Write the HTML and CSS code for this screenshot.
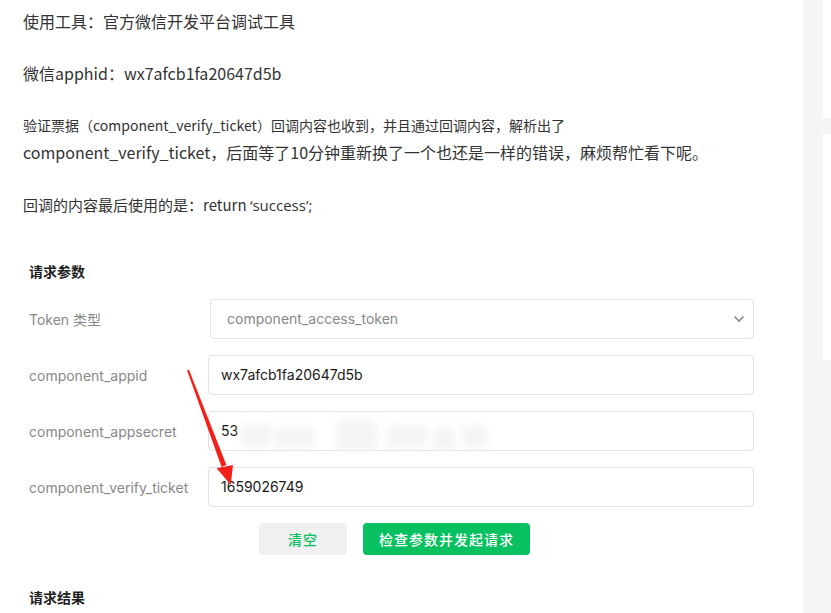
FILE: index.html
```html
<!DOCTYPE HTML>
<html lang="zh-CN">
<head>
	<meta charset="UTF-8">
	<title>请求参数</title>
	<link rel="stylesheet" href="styles.css">
</head>
<body>
	<div class="pagina">
		<div class="principal">
			<div class="post">
				<p class="p1">使用工具：官方微信开发平台调试工具</p>
				<p class="p2">微信apphid：wx7afcb1fa20647d5b</p>
				<p class="p3"><span class="chico">验证票据（component_verify_ticket）回调内容也收到，并且通过回调内容，解析出了</span><br>component_verify_ticket，后面等了10分钟重新换了一个也还是一样的错误，麻烦帮忙看下呢。</p>
				<p class="p4">回调的内容最后使用的是：return <span class="latino">‘success’;</span></p>
			</div>

			<div class="formulario">
				<h3 class="titulo">请求参数</h3>
				<div class="fila">
					<label class="etiqueta">Token 类型</label>
					<div class="control selector">
						<span>component_access_token</span>
						<svg class="flecha" width="12" height="8" viewBox="0 0 12 8"><path d="M1.5 1.5 L6 6 L10.5 1.5" fill="none" stroke="#888" stroke-width="1.6"/></svg>
					</div>
				</div>
				<div class="fila">
					<label class="etiqueta">component_appid</label>
					<div class="control">wx7afcb1fa20647d5b</div>
				</div>
				<div class="fila">
					<label class="etiqueta">component_appsecret</label>
					<div class="control secreto">53
						<div class="borron">
							<i style="left:4px;top:2px;width:30px;height:22px"></i>
							<i style="left:38px;top:6px;width:40px;height:20px"></i>
							<i style="left:100px;top:-2px;width:40px;height:30px"></i>
							<i style="left:150px;top:4px;width:40px;height:22px"></i>
							<i style="left:196px;top:6px;width:22px;height:22px"></i>
							<i style="left:226px;top:4px;width:24px;height:22px"></i>
						</div>
					</div>
				</div>
				<div class="fila">
					<label class="etiqueta">component_verify_ticket</label>
					<div class="control">1659026749</div>
				</div>
				<div class="botones">
					<button class="btn limpiar">清空</button>
					<button class="btn enviar">检查参数并发起请求</button>
				</div>
				<h3 class="titulo resultado">请求结果</h3>
			</div>

			<!-- flecha roja de la captura -->
			<svg class="marca" width="60" height="130" viewBox="0 0 60 130">
				<polygon points="7.1,10.4 8.9,9.6 46.4,105.1 41.6,106.9" fill="#f3201a"/>
				<polygon points="50.7,125 36.7,108.3 53,105" fill="#f3201a"/>
			</svg>
		</div>

		<div class="lateral">
			<div class="tarjeta t1"></div>
			<div class="tarjeta t2"></div>
		</div>
	</div>
</body>
</html>
```

FILE: styles.css
```css
/* base */
html, body {
margin: 0;
padding: 0;
background: #fff;
}
body {
font-family: "Noto Sans CJK SC", sans-serif;
color: #333;
}

.pagina {
display: flex;
width: 831px;
height: 613px;
overflow: hidden;
}

.principal {
position: relative;
width: 803px;
flex: none;
}

/* texto del post */
.post {
padding: 8px 0 0 23px;
}
.post p {
margin: 0;
font-size: 16px;
line-height: 26px;
}
.post .p2 {
margin-top: 26px;
}
.post .p3 {
margin-top: 25px;
line-height: 27px;
}
.post .p3 .chico {
font-size: 14px;
}
.post .p4 {
margin-top: 26px;
font-size: 15px;
}
.latino {
font-family: "Open Sans", sans-serif;
}

/* formulario */
.formulario {
padding: 43px 0 0 29px;
width: 725px;
font-family: Inter, "Noto Sans CJK SC", sans-serif;
}
.titulo {
margin: 0 0 16px 0;
font-size: 14px;
font-weight: 600;
line-height: 22px;
color: #1f1f1f;
}
.resultado {
margin-top: 32px;
}

.fila {
display: flex;
align-items: center;
height: 40px;
margin-bottom: 16px;
}
.etiqueta {
width: 179px;
flex: none;
font-size: 14px;
color: #888;
}
.control {
position: relative;
flex: 1;
box-sizing: border-box;
height: 40px;
line-height: 38px;
border: 1px solid #e3e3e3;
border-radius: 4px;
padding: 0 12px;
font-size: 14px;
color: #1a1a1a;
}
.selector {
display: flex;
justify-content: space-between;
align-items: center;
margin-left: 2px;
padding: 0 8px 0 16px;
color: #888;
}
.flecha {
display: block;
}

/* zona emborronada del secreto */
.borron {
position: absolute;
left: 28px;
top: 10px;
width: 260px;
height: 32px;
}
.borron i {
position: absolute;
background: #f4f4f4;
filter: blur(4px);
}

.botones {
display: flex;
gap: 16px;
padding-left: 230px;
}
.btn {
height: 32px;
border: 0;
border-radius: 4px;
font-family: "Noto Sans CJK SC", sans-serif;
font-size: 14px;
font-weight: 500;
letter-spacing: 1px;
}
.limpiar {
width: 88px;
background: #f0f0f0;
color: #07c160;
}
.enviar {
width: 167px;
background: #07c160;
color: #fff;
}

.marca {
position: absolute;
left: 180px;
top: 360px;
}

/* barra lateral */
.lateral {
flex: 1;
background: #f5f5f5;
padding-left: 20px;
}
.tarjeta {
background: #fff;
}
.t1 {
height: 118px;
margin-bottom: 16px;
}
.t2 {
height: 226px;
}
```
